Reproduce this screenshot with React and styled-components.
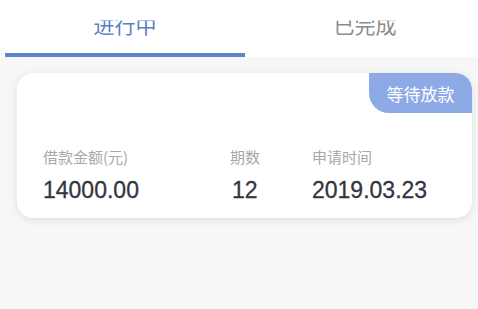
import React from "react";
import styled, { createGlobalStyle } from "styled-components";

const GlobalStyle = createGlobalStyle`
  html, body {
    margin: 0;
    padding: 0;
    background: #f7f7f7;
    font-family: "Noto Sans CJK SC", "Liberation Sans", sans-serif;
  }
`;

const Page = styled.div`
  width: 478px;
  height: 309px;
  overflow: hidden;
  background: #f7f7f7;
`;

const TabBar = styled.div`
  display: flex;
  padding-left: 5px;
  background: #ffffff;
  height: 57px;
  box-sizing: border-box;
`;

const Tab = styled.div`
  flex: 0 0 240px;
  display: flex;
  justify-content: center;
  box-sizing: border-box;
  border-bottom: 4px solid ${(p) => (p.active ? "#5a85cd" : "transparent")};
`;

const TabLabel = styled.span`
  margin-top: 11px;
  font-size: 21px;
  line-height: 26px;
  height: 26px;
  color: ${(p) => (p.active ? "#5b7fc1" : "#8c8c8c")};
  clip-path: inset(9.5px 0 0 0);
`;

const Card = styled.div`
  margin: 16px 6px 0 17px;
  background: #ffffff;
  border-radius: 16px;
  box-shadow: 0 2px 8px rgba(0, 0, 0, 0.1);
  overflow: hidden;
  padding-bottom: 14px;
`;

const BadgeRow = styled.div`
  display: flex;
  justify-content: flex-end;
`;

const Badge = styled.div`
  height: 40px;
  width: 103px;
  display: flex;
  align-items: center;
  justify-content: center;
  background: #8eaae6;
  color: #ffffff;
  font-size: 17px;
  border-radius: 0 16px 0 20px;
`;

const InfoRow = styled.div`
  display: flex;
  margin-top: 34px;
  padding-left: 26px;
`;

const Field = styled.div`
  flex: 0 0 ${(p) => p.w || "auto"};
  display: flex;
  flex-direction: column;
  gap: 9px;
`;

const Label = styled.div`
  font-size: 15px;
  line-height: 20px;
  color: #a8a8a8;
`;

const Value = styled.div`
  font-family: "Liberation Sans", sans-serif;
  font-size: 23px;
  line-height: 28px;
  color: #33363e;
  -webkit-text-stroke: 0.3px #33363e;
  padding-left: ${(p) => p.indent || 0};
`;

export default function App() {
  return (
    <Page>
      <GlobalStyle />
      <TabBar>
        <Tab active>
          <TabLabel active>进行中</TabLabel>
        </Tab>
        <Tab>
          <TabLabel>已完成</TabLabel>
        </Tab>
      </TabBar>
      <Card>
        <BadgeRow>
          <Badge>等待放款</Badge>
        </BadgeRow>
        <InfoRow>
          <Field w="187px">
            <Label>借款金额(元)</Label>
            <Value>14000.00</Value>
          </Field>
          <Field w="82px">
            <Label>期数</Label>
            <Value indent="2px">12</Value>
          </Field>
          <Field>
            <Label>申请时间</Label>
            <Value>2019.03.23</Value>
          </Field>
        </InfoRow>
      </Card>
    </Page>
  );
}
